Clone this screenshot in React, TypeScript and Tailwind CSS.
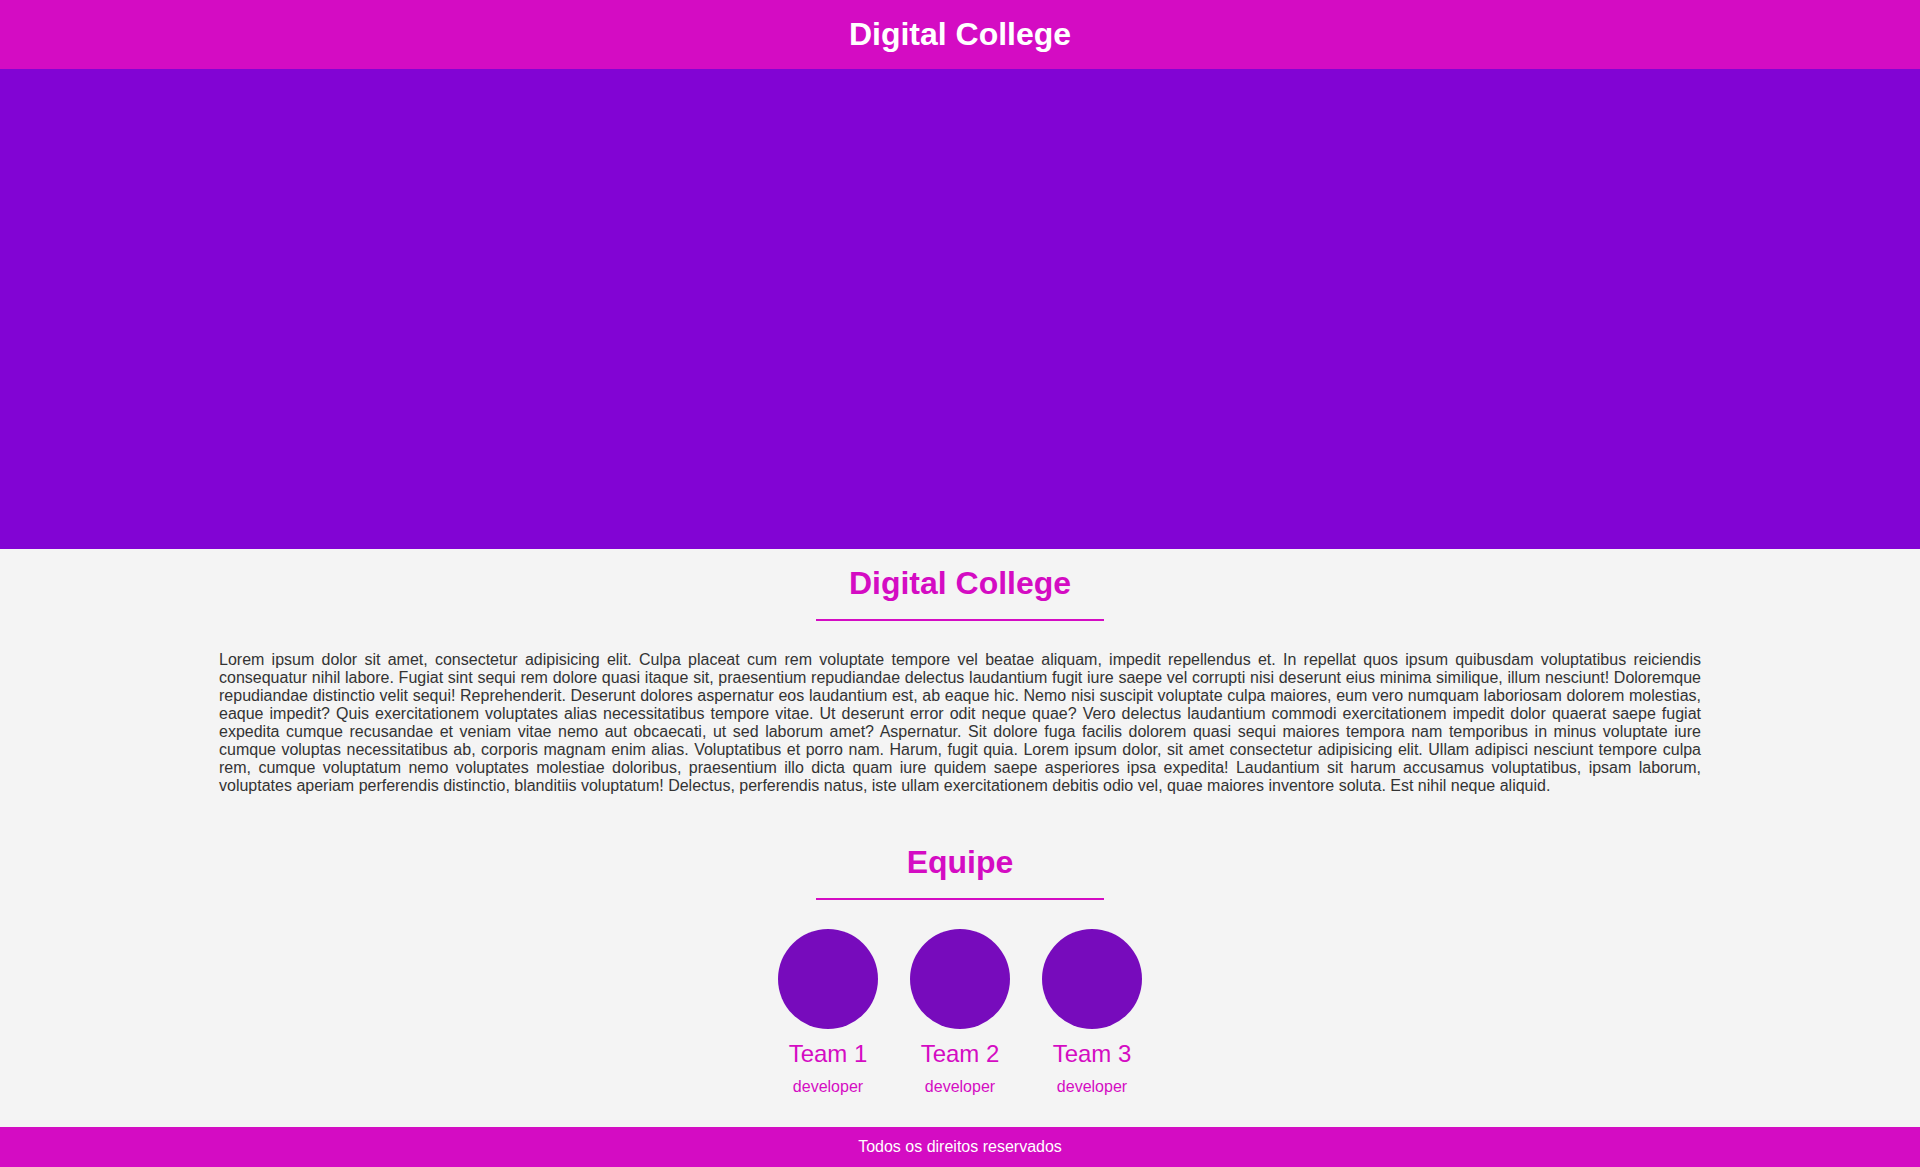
import React from 'react';

const texto =
  'Lorem ipsum dolor sit amet, consectetur adipisicing elit. Culpa placeat cum rem voluptate tempore vel beatae aliquam, impedit repellendus et. In repellat quos ipsum quibusdam voluptatibus reiciendis consequatur nihil labore. Fugiat sint sequi rem dolore quasi itaque sit, praesentium repudiandae delectus laudantium fugit iure saepe vel corrupti nisi deserunt eius minima similique, illum nesciunt! Doloremque repudiandae distinctio velit sequi! Reprehenderit. Deserunt dolores aspernatur eos laudantium est, ab eaque hic. Nemo nisi suscipit voluptate culpa maiores, eum vero numquam laboriosam dolorem molestias, eaque impedit? Quis exercitationem voluptates alias necessitatibus tempore vitae. Ut deserunt error odit neque quae? Vero delectus laudantium commodi exercitationem impedit dolor quaerat saepe fugiat expedita cumque recusandae et veniam vitae nemo aut obcaecati, ut sed laborum amet? Aspernatur. Sit dolore fuga facilis dolorem quasi sequi maiores tempora nam temporibus in minus voluptate iure cumque voluptas necessitatibus ab, corporis magnam enim alias. Voluptatibus et porro nam. Harum, fugit quia. Lorem ipsum dolor, sit amet consectetur adipisicing elit. Ullam adipisci nesciunt tempore culpa rem, cumque voluptatum nemo voluptates molestiae doloribus, praesentium illo dicta quam iure quidem saepe asperiores ipsa expedita! Laudantium sit harum accusamus voluptatibus, ipsam laborum, voluptates aperiam perferendis distinctio, blanditiis voluptatum! Delectus, perferendis natus, iste ullam exercitationem debitis odio vel, quae maiores inventore soluta. Est nihil neque aliquid.';

const equipe = ['Team 1', 'Team 2', 'Team 3'];

function Titulo({ children }: { children: React.ReactNode }) {
  return (
    <div className="flex flex-col items-center">
      <h2 className="text-[32px] leading-[37px] font-bold text-[#d40cc3]">{children}</h2>
      <div className="mt-[17px] w-[288px] h-[2px] bg-[#d40cc3]" />
    </div>
  );
}

export default function App() {
  return (
    <div className="min-h-[1167px] flex flex-col bg-[#f4f4f4] font-['Liberation_Sans',Arial,sans-serif]">
      {/* cabeçalho */}
      <header className="h-[69px] flex items-center justify-center bg-[#d40cc3]">
        <h1 className="text-[32px] leading-[37px] font-bold text-white">Digital College</h1>
      </header>

      {/* banner */}
      <div className="h-[480px] bg-[#8204d4]" />

      {/* sobre */}
      <section className="pt-[16px]">
        <Titulo>Digital College</Titulo>
        <p className="mx-auto mt-[30px] w-[1482px] text-justify text-base leading-[18px] text-[#333]">
          {texto}
        </p>
      </section>

      {/* equipe */}
      <section className="pt-[49px] pb-[30px]">
        <Titulo>Equipe</Titulo>
        <div className="mt-[29px] flex justify-center gap-8">
          {equipe.map((nome) => (
            <div key={nome} className="flex flex-col items-center">
              <div className="w-[100px] h-[100px] rounded-full bg-[#770bbc]" />
              <h3 className="mt-[11px] text-[24px] leading-[28px] text-[#d40cc3]">{nome}</h3>
              <span className="mt-[10px] text-base leading-[18px] text-[#d40cc3]">developer</span>
            </div>
          ))}
        </div>
      </section>

      <footer className="mt-auto h-[40px] flex items-center justify-center bg-[#d40cc3] text-white text-base">
        Todos os direitos reservados
      </footer>
    </div>
  );
}
